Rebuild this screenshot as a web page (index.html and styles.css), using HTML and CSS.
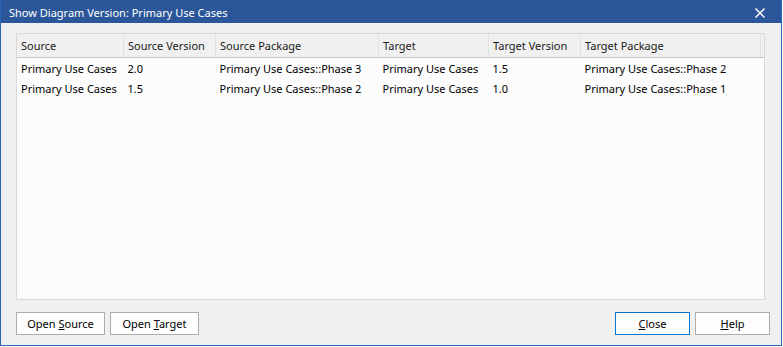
FILE: index.html
```html
<!DOCTYPE html>
<html lang="en">
<head>
  <meta charset="UTF-8">
  <title>Show Diagram Version: Primary Use Cases</title>
  <link rel="stylesheet" href="styles.css">
</head>
<body>
  <div class="dialog">
    <div class="titlebar">
      <span class="title">Show Diagram Version: Primary Use Cases</span>
      <span class="close-x">
        <svg width="10" height="10" viewBox="0 0 10 10"><path d="M0.5 0.5 L9.5 9.5 M9.5 0.5 L0.5 9.5" stroke="#fff" stroke-width="1.5"/></svg>
      </span>
    </div>

    <div class="content">
      <div class="list">
        <table>
          <thead>
            <tr>
              <th class="c1">Source</th>
              <th class="c2">Source Version</th>
              <th class="c3">Source Package</th>
              <th class="c4">Target</th>
              <th class="c5">Target Version</th>
              <th class="c6">Target Package</th>
              <th class="filler"></th>
            </tr>
          </thead>
          <tbody>
            <tr>
              <td>Primary Use Cases</td>
              <td>2.0</td>
              <td>Primary Use Cases::Phase 3</td>
              <td>Primary Use Cases</td>
              <td>1.5</td>
              <td>Primary Use Cases::Phase 2</td>
              <td></td>
            </tr>
            <tr>
              <td>Primary Use Cases</td>
              <td>1.5</td>
              <td>Primary Use Cases::Phase 2</td>
              <td>Primary Use Cases</td>
              <td>1.0</td>
              <td>Primary Use Cases::Phase 1</td>
              <td></td>
            </tr>
          </tbody>
        </table>
      </div>

      <div class="buttons">
        <div class="left">
          <button class="btn wide">Open <u>S</u>ource</button>
          <button class="btn wide">Open <u>T</u>arget</button>
        </div>
        <div class="right">
          <button class="btn default"><u>C</u>lose</button>
          <button class="btn"><u>H</u>elp</button>
        </div>
      </div>
    </div>
  </div>
</body>
</html>
```

FILE: styles.css
```css
body {
  margin: 0;
  font-family: "Noto Sans", "Open Sans", sans-serif;
  font-size: 11px;
  color: #000;
  background: #fff;
}

.dialog {
  width: 780px;
  height: 345px;
  border: 1px solid #2b65b8;
  border-top: none;
  background: #f0f0f0;
  display: flex;
  flex-direction: column;
}

.titlebar {
  height: 23px;
  background: #2b579a;
  color: #fff;
  display: flex;
  align-items: center;
  justify-content: space-between;
  padding: 0 16px 0 8px;
}

.title {
  font-size: 11px;
  padding-top: 1px;
}

.close-x {
  display: flex;
  align-items: center;
  margin-top: 2px;
}

.content {
  flex: 1;
  padding: 10px 15px 10px 15px;
  display: flex;
  flex-direction: column;
}

.list {
  width: 747px;
  height: 265px;
  border: 1px solid #d9d9d9;
  background: #fcfcfc;
  overflow: hidden;
}

table {
  border-collapse: collapse;
  table-layout: fixed;
  width: 100%;
}

th {
  height: 23px;
  padding: 0 0 0 4px;
  text-align: left;
  font-weight: normal;
  color: #1a1a1a;
  background: #f0f0f0;
  border-bottom: 1px solid #c8c8c8;
  border-right: 1px solid #e2e2e2;
  white-space: nowrap;
  overflow: hidden;
}

th.filler {
  border-right: none;
}

td {
  height: 20px;
  padding: 0 0 0 4px;
  white-space: nowrap;
  overflow: hidden;
}

.c1 { width: 102px; }
.c2 { width: 87px; }
.c3 { width: 158px; }
.c4 { width: 105px; }
.c5 { width: 87px; }
.c6 { width: 175px; }

.buttons {
  display: flex;
  justify-content: space-between;
  margin-top: 12px;
}

.left, .right {
  display: flex;
  gap: 5px;
}

.right {
  margin-right: -4px;
}

.btn {
  height: 23px;
  width: 75px;
  font-family: inherit;
  font-size: 11px;
  background: #fdfdfd;
  border: 1px solid #adadad;
  padding: 0;
  color: #000;
}

.btn.wide {
  width: 89px;
}

.btn.default {
  border-color: #0078d7;
}
```
